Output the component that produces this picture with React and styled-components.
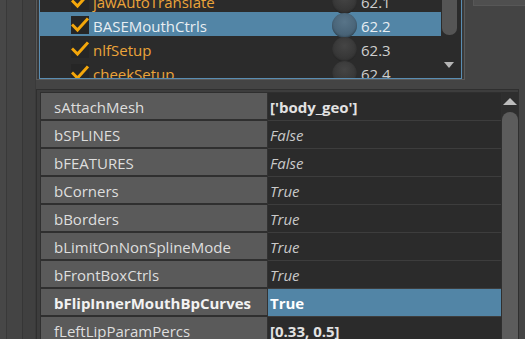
import React from "react";
import styled, { createGlobalStyle } from "styled-components";

const GlobalStyle = createGlobalStyle`
  html, body { margin: 0; padding: 0; background: #444444; overflow: hidden; }
  body { font-family: "Open Sans", "Noto Sans", sans-serif; }
`;

const Window = styled.div`
  width: 525px;
  height: 339px;
  display: flex;
  background: #444444;
  overflow: hidden;
`;

const SideRail = styled.div`
  display: flex;
  flex-shrink: 0;
  width: 36px;
`;

const RailStrip = styled.div`
  width: ${(p) => p.$w}px;
  background: ${(p) => p.$bg};
  border-right: 1px solid ${(p) => p.$line};
`;

const MainColumn = styled.div`
  display: flex;
  flex-direction: column;
  flex: 1;
  min-width: 0;
`;

const TopRow = styled.div`
  display: flex;
  height: 80px;
  flex-shrink: 0;
`;

const ListOuter = styled.div`
  width: 423px;
  height: 79px;
  padding: 0 2px;
  background: #393939;
  border: 1px solid #5a5a5a;
  border-top: none;
`;

const ListFrame = styled.div`
  display: flex;
  height: 78px;
  background: #2b2b2b;
  border: 1px solid #5a8db2;
  border-top: none;
`;

const ListViewport = styled.div`
  flex: 1;
  overflow: hidden;
`;

const ListScroll = styled.div`
  margin-top: -12px;
`;

const ListRow = styled.div`
  display: grid;
  grid-template-columns: 18px 1fr 24px 80px;
  align-items: center;
  column-gap: 4px;
  height: 24px;
  padding-left: 31px;
  background: ${(p) => (p.$selected ? "#5285a6" : "transparent")};
  color: ${(p) => (p.$selected ? "#e8eef2" : "#eba43a")};
  font-size: 15px;
  white-space: nowrap;
`;

const CheckBox = styled.div`
  width: 18px;
  height: 18px;
  background: #262626;
  display: flex;
  align-items: center;
  justify-content: center;
`;

const ItemName = styled.span`
  line-height: 24px;
  padding-top: 2px;
`;

const Bead = styled.div`
  width: 25px;
  height: 25px;
  margin-left: -1px;
  border-radius: 50%;
  background: ${(p) =>
    p.$selected
      ? "radial-gradient(circle at 50% 35%, #587488 0%, #4a6579 55%, #3f5869 100%)"
      : "radial-gradient(circle at 50% 35%, #454545 0%, #383838 55%, #2e2e2e 100%)"};
  box-shadow: inset 0 -1px 2px rgba(0, 0, 0, 0.35);
`;

const ItemValue = styled.span`
  color: ${(p) => (p.$selected ? "#e8eef2" : "#cfcfcf")};
  line-height: 24px;
  padding-top: 2px;
`;

const ListScrollbar = styled.div`
  width: 20px;
  display: flex;
  flex-direction: column;
  align-items: center;
  background: #2b2b2b;
`;

const ListThumb = styled.div`
  width: 15px;
  height: 35px;
  margin-right: 4px;
  background: #555555;
  border-radius: 0 0 7px 7px;
`;

const ArrowDown = styled.div`
  margin-top: 27px;
  margin-right: 4px;
  width: 0;
  height: 0;
  border-left: 5px solid transparent;
  border-right: 5px solid transparent;
  border-top: 6px solid #b5b5b5;
`;

const ArrowUp = styled.div`
  width: 0;
  height: 0;
  border-left: 7px solid transparent;
  border-right: 7px solid transparent;
  border-bottom: 7px solid #bdbdbd;
`;

const CornerArea = styled.div`
  flex: 1;
  padding-left: 8px;
`;

const CornerButton = styled.div`
  height: 5px;
  background: #4f4f4f;
  border-left: 1px solid #575757;
  border-bottom: 1px solid #575757;
`;

const AttrPanel = styled.div`
  display: flex;
  margin-top: 9px;
  width: 478px;
  height: 260px;
  padding: 2px 0 0 3px;
  border: 1px solid #2f2f2f;
  border-bottom: none;
  background: #3d3d3d;
`;

const AttrTable = styled.div`
  display: flex;
  flex-direction: column;
  width: 461px;
  border-left: 1px solid #2f2f2f;
  border-top: 1px solid #2f2f2f;
  border-right: 1px solid #2f2f2f;
  background: #2b2b2b;
`;

const AttrRow = styled.div`
  display: grid;
  grid-template-columns: 227px 233px;
  height: 28px;
  flex-shrink: 0;
  font-size: 15px;
  white-space: nowrap;
`;

const AttrLabel = styled.div`
  display: flex;
  align-items: center;
  padding: 1px 0 0 13px;
  background: #5a5a5a;
  border-right: 1px solid #333333;
  border-bottom: 2px solid #2f2f2f;
  color: ${(p) => (p.$selected ? "#f2f2f2" : "#dedede")};
  font-weight: ${(p) => (p.$selected ? 700 : 400)};
`;

const AttrValue = styled.div`
  display: flex;
  align-items: center;
  padding: 1px 0 0 2px;
  background: ${(p) => (p.$selected ? "#5285a6" : "#2b2b2b")};
  border-bottom: 1px solid #3d3d3d;
  color: ${(p) => (p.$selected ? "#ffffff" : p.$bold ? "#e2e2e2" : "#c9c9c9")};
  font-style: ${(p) => (p.$bold || p.$selected ? "normal" : "italic")};
  font-weight: ${(p) => (p.$bold || p.$selected ? 700 : 400)};
`;

const AttrScrollbar = styled.div`
  width: 18px;
  display: flex;
  flex-direction: column;
  align-items: center;
  padding-top: 6px;
  background: #2e2e2e;
  border-right: 1px solid #2f2f2f;
`;

const AttrThumb = styled.div`
  width: 16px;
  flex: 1;
  margin-top: 7px;
  background: #5c5c5c;
  border-radius: 8px 8px 0 0;
`;

const Check = () => (
  <svg width="18" height="18" viewBox="0 0 18 18">
    <path
      d="M2 9.5 L6.5 14 L16 3.5"
      fill="none"
      stroke="#f4a70b"
      strokeWidth="3"
      strokeLinecap="square"
      strokeLinejoin="miter"
    />
  </svg>
);

const listItems = [
  { name: "jawAutoTranslate", value: "62.1" },
  { name: "BASEMouthCtrls", value: "62.2", selected: true },
  { name: "nlfSetup", value: "62.3" },
  { name: "cheekSetup", value: "62.4" },
];

const attrs = [
  { label: "sAttachMesh", value: "['body_geo']", bold: true },
  { label: "bSPLINES", value: "False" },
  { label: "bFEATURES", value: "False" },
  { label: "bCorners", value: "True" },
  { label: "bBorders", value: "True" },
  { label: "bLimitOnNonSplineMode", value: "True" },
  { label: "bFrontBoxCtrls", value: "True" },
  { label: "bFlipInnerMouthBpCurves", value: "True", selected: true },
  { label: "fLeftLipParamPercs", value: "[0.33, 0.5]", bold: true },
];

export default function App() {
  return (
    <>
      <GlobalStyle />
      <Window>
        <SideRail>
          <RailStrip $w={6} $bg="#474747" $line="#393939" />
          <RailStrip $w={15} $bg="#444444" $line="#363636" />
          <RailStrip $w={12} $bg="#404040" $line="#3a3a3a" />
        </SideRail>
        <MainColumn>
          <TopRow>
            <ListOuter>
              <ListFrame>
                <ListViewport>
                  <ListScroll>
                    {listItems.map((it) => (
                      <ListRow key={it.name} $selected={it.selected}>
                        <CheckBox>
                          <Check />
                        </CheckBox>
                        <ItemName>{it.name}</ItemName>
                        <Bead $selected={it.selected} />
                        <ItemValue $selected={it.selected}>{it.value}</ItemValue>
                      </ListRow>
                    ))}
                  </ListScroll>
                </ListViewport>
                <ListScrollbar>
                  <ListThumb />
                  <ArrowDown />
                </ListScrollbar>
              </ListFrame>
            </ListOuter>
            <CornerArea>
              <CornerButton />
            </CornerArea>
          </TopRow>
          <AttrPanel>
            <AttrTable>
              {attrs.map((a) => (
                <AttrRow key={a.label}>
                  <AttrLabel $selected={a.selected}>{a.label}</AttrLabel>
                  <AttrValue $selected={a.selected} $bold={a.bold}>
                    {a.value}
                  </AttrValue>
                </AttrRow>
              ))}
            </AttrTable>
            <AttrScrollbar>
              <ArrowUp />
              <AttrThumb />
            </AttrScrollbar>
          </AttrPanel>
        </MainColumn>
      </Window>
    </>
  );
}
